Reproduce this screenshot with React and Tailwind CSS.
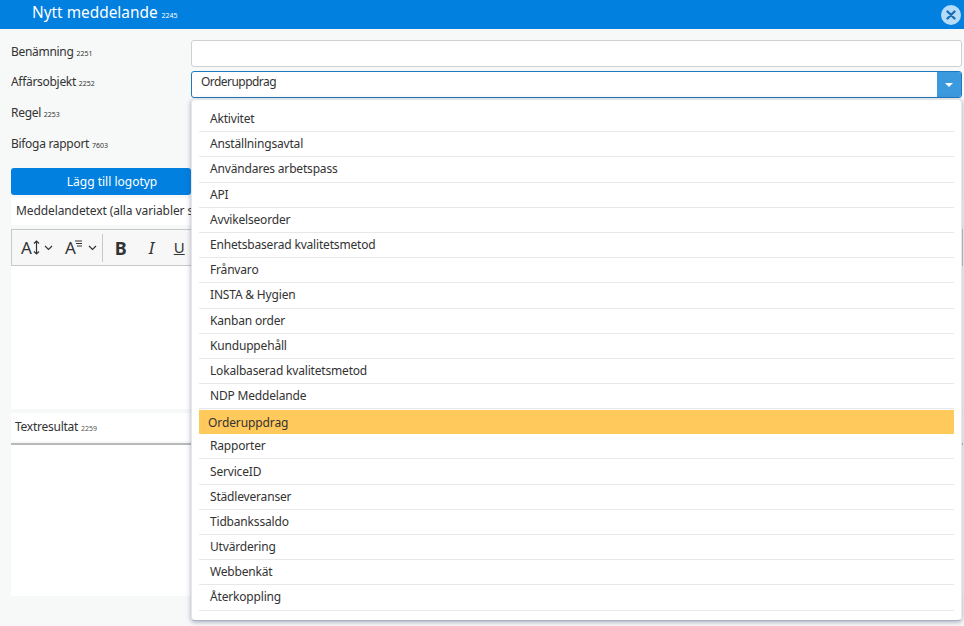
const items1 = ["Aktivitet","Anställningsavtal","Användares arbetspass","API","Avvikelseorder","Enhetsbaserad kvalitetsmetod","Frånvaro","INSTA & Hygien","Kanban order","Kunduppehåll","Lokalbaserad kvalitetsmetod","NDP Meddelande"];
const items2 = ["Rapporter","ServiceID","Städleveranser","Tidbankssaldo","Utvärdering","Webbenkät","Återkoppling"];

function Label({ text, code, className = "" }) {
  return (
    <div className={`w-[180px] shrink-0 text-[12px] tracking-[-0.3px] text-[#333] ${className}`}>
      {text} <span className="text-[7px] tracking-normal">{code}</span>
    </div>
  );
}

function Item({ text }) {
  return (
    <div className="h-[25.2px] pl-[11px] flex items-center border-b border-[#e8e8e8] text-[12px] tracking-[-0.18px] text-[#333]">{text}</div>
  );
}

export default function App() {
  return (
    <div className="relative w-[964px] h-[626px] overflow-hidden bg-[#f7f9f9] text-[#333]" style={{ fontFamily: '"Noto Sans", "Open Sans", sans-serif' }}>
      <header className="h-[29px] bg-[#0180e0] flex items-center justify-between pl-[32px] pr-[3px] text-white">
        <div className="text-[15.4px] -translate-y-[2px]">Nytt meddelande <span className="text-[7px]">2245</span></div>
        <div className="w-[20px] h-[20px] rounded-full bg-[#b5dcf8] flex items-center justify-center">
          <svg width="10" height="10" viewBox="0 0 10 10"><path d="M1.5 1.5 8.5 8.5M8.5 1.5 1.5 8.5" stroke="#1a6fb5" strokeWidth="2.4" strokeLinecap="round" /></svg>
        </div>
      </header>
      <main className="pl-[11px] pr-[1px]">
        <div className="flex items-center mt-[11px] h-[27px] pr-[1px]">
          <Label text="Benämning" code="2251" className="-translate-y-[2px]" />
          <div className="flex-1 h-full bg-white border border-[#cfcfcf] rounded-[3px]" />
        </div>
        <div className="flex items-center mt-[4px] h-[27px] pr-[1px]">
          <Label text="Affärsobjekt" code="2252" className="-translate-y-[3px]" />
          <div className="flex-1 h-full flex bg-white border border-[#1e78bd] rounded-[3px] overflow-hidden">
            <div className="flex-1 pl-[9px] text-[12px] tracking-[-0.55px] leading-[20px]">Orderuppdrag</div>
            <div className="w-[24px] bg-[#3b99de] flex items-center justify-center">
              <div className="w-0 h-0 border-x-[4px] border-x-transparent border-t-[4px] border-t-white" />
            </div>
          </div>
        </div>
        <Label text="Regel" code="2253" className="mt-[6px] h-[30px] leading-[18px]" />
        <Label text="Bifoga rapport" code="7603" className="mt-px h-[33px] leading-[18px]" />
        <button className="block w-[180px] h-[27px] bg-[#0180e0] rounded-[3px] text-white text-[12px] pl-[22px]">Lägg till logotyp</button>
        <div className="h-[27px] mt-[3px] bg-white pl-[5px] leading-[26px] text-[12px] tracking-[-0.1px] text-[#333]">Meddelandetext (alla variabler s</div>
        <div className="h-[37px] mt-[4px] border border-[#c8c8c8] bg-[#f7f7f7] flex items-center text-[#333]">
          <span className="ml-[9px] text-[17px] leading-none">A</span>
          <svg width="7" height="15" viewBox="0 0 7 15" className="ml-[1px]"><path d="M3.5 1v13M1 3.5 3.5 1 6 3.5M1 11.5 3.5 14 6 11.5" fill="none" stroke="#333" strokeWidth="1.2" /></svg>
          <svg width="9" height="6" viewBox="0 0 9 6" className="ml-[4px]"><path d="M1 1l3.5 3.5L8 1" fill="none" stroke="#333" strokeWidth="1.2" /></svg>
          <span className="ml-[12px] text-[17px] leading-none">A</span>
          <svg width="8" height="8" viewBox="0 0 8 8" className="-ml-[1px] -mt-[8px]"><path d="M0 1h7M1 3.5h6M2 6h5" stroke="#333" strokeWidth="1" /></svg>
          <svg width="9" height="6" viewBox="0 0 9 6" className="ml-[5px]"><path d="M1 1l3.5 3.5L8 1" fill="none" stroke="#333" strokeWidth="1.2" /></svg>
          <div className="ml-[5px] w-px h-[28px] bg-[#c8c8c8]" />
          <span className="ml-[12px] w-[14px] text-[18px] font-bold leading-none">B</span>
          <span className="ml-[20px] w-[10px] text-[17px] italic leading-none">I</span>
          <span className="ml-[15px] text-[15px] underline leading-none">U</span>
        </div>
        <div className="h-[143px] bg-white" />
        <div className="h-[28px] mt-[4px] bg-white pl-[4px] leading-[28px] text-[12px] tracking-[-0.25px]">Textresultat <span className="text-[7px] tracking-normal text-[#555]">2259</span></div>
        <div className="h-[2px] mt-[2px] bg-[#b8b8b8]" />
        <div className="h-[151px] bg-white" />
      </main>
      <div className="absolute left-[191px] top-[99px] w-[771px] h-[522px] bg-white rounded-[4px] border border-[#e4e6ea] border-b-[#aab0bd] shadow-[0_1px_5px_rgba(60,70,100,0.45)] pt-[7px] px-[7px]">
        {items1.map((t) => <Item key={t} text={t} />)}
        <div className="h-[24px] mt-[1px] bg-[#ffc95c] pl-[9px] pt-[2px] flex items-center text-[12px] tracking-[-0.1px] text-[#333]">Orderuppdrag</div>
        {items2.map((t) => <Item key={t} text={t} />)}
      </div>
    </div>
  );
}
